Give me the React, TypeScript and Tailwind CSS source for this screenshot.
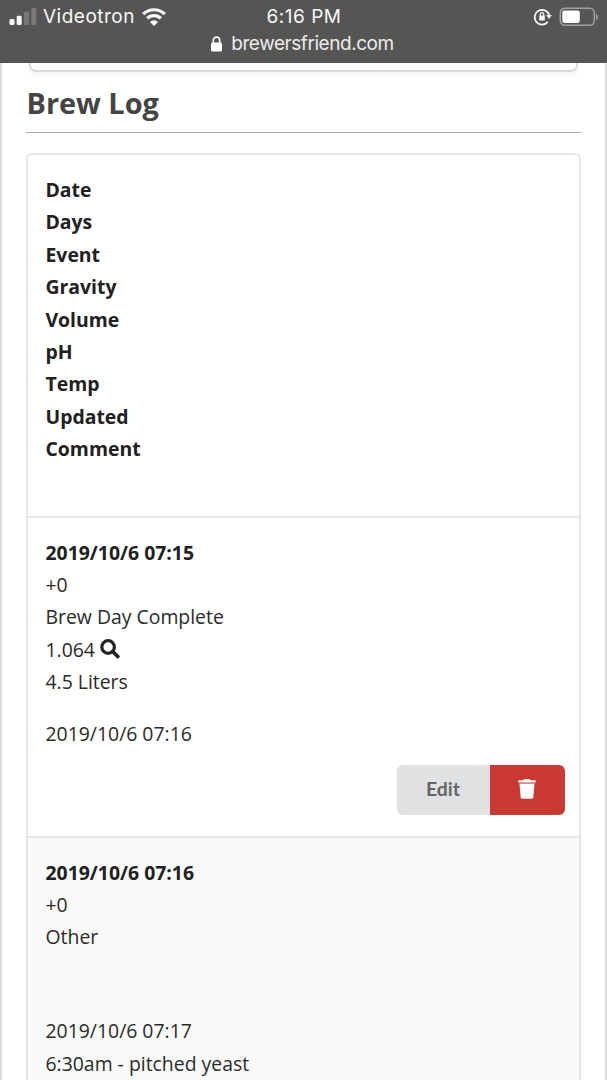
import React from "react"

type Entry = {
  date: string
  days: string
  event: string
  gravity?: string
  volume?: string
  updated: string
  comment?: string
}

const columns = [
  "Date",
  "Days",
  "Event",
  "Gravity",
  "Volume",
  "pH",
  "Temp",
  "Updated",
  "Comment",
]

const entries: Entry[] = [
  {
    date: "2019/10/6 07:15",
    days: "+0",
    event: "Brew Day Complete",
    gravity: "1.064",
    volume: "4.5 Liters",
    updated: "2019/10/6 07:16",
  },
  {
    date: "2019/10/6 07:16",
    days: "+0",
    event: "Other",
    updated: "2019/10/6 07:17",
    comment: "6:30am - pitched yeast",
  },
]

function StatusBar() {
  return (
    <header className="relative z-10 h-[63px] shrink-0 bg-[#555554] text-[#f8f8f8] font-[Inter,sans-serif]">
      <div className="grid grid-cols-3 items-center h-[33px] pl-[9px] pr-[8px]">
        <div className="flex items-center">
          <svg width="28" height="18" viewBox="0 0 28 18" fill="currentColor">
            <rect x="0.5" y="11" width="5" height="6" rx="1.3" />
            <rect x="7.7" y="7.7" width="5" height="9.3" rx="1.3" />
            <rect x="15" y="3.5" width="5" height="13.5" rx="1.3" opacity=".22" />
            <rect x="22.3" y="0" width="5" height="17" rx="1.3" opacity=".22" />
          </svg>
          <span className="ml-[6px] text-[19px] leading-[33px] tracking-[0.5px]">
            Videotron
          </span>
          <svg
            className="ml-[7px] shrink-0"
            width="24"
            height="18"
            viewBox="0 0 24 18"
            fill="none"
            stroke="currentColor"
            strokeWidth="3.2"
          >
            <path d="M1.2 6.2a15.3 15.3 0 0 1 21.6 0" />
            <path d="M5.2 10.4a9.6 9.6 0 0 1 13.6 0" />
            <path d="M12 18l-4-4.1a5.7 5.7 0 0 1 8 0z" fill="currentColor" stroke="none" />
          </svg>
        </div>
        <span className="text-center text-[19px] leading-[33px] tracking-[0.5px]">
          6:16 PM
        </span>
        <div className="flex items-center justify-end">
          <svg width="20" height="18" viewBox="0 0 20 18" fill="none" stroke="currentColor">
            <path d="M14.8 13.9A7.4 7.4 0 1 1 16.1 7" strokeWidth="1.8" />
            <path d="M13.2 7.1h5.6l-2.8 4z" fill="currentColor" stroke="none" />
            <rect x="6.2" y="7.5" width="5.6" height="5" rx=".6" fill="currentColor" stroke="none" />
            <path d="M7.3 8V6.3a1.7 1.7 0 0 1 3.4 0V8" strokeWidth="1.2" />
          </svg>
          <svg className="ml-[6px]" width="40" height="20" viewBox="0 0 40 20" fill="none">
            <rect x="1.3" y="1.3" width="34" height="17" rx="4.5" stroke="#a0a0a0" strokeWidth="1.5" />
            <rect x="3.3" y="3.5" width="17.5" height="12.5" rx="2.2" fill="#fff" />
            <path d="M37 7c2.5.8 2.5 5.2 0 6z" fill="#a0a0a0" />
          </svg>
        </div>
      </div>
      <div className="flex items-center justify-center h-[22px] text-[#ececec]">
        <svg width="11" height="16" viewBox="0 0 11 16" fill="none">
          <rect x="0" y="6.5" width="11" height="9" rx="1.5" fill="#fff" />
          <path d="M2.3 7.5V4.3a3.2 3.2 0 0 1 6.4 0v3.2" stroke="#fff" strokeWidth="1.6" />
        </svg>
        <span className="ml-[9px] mr-[2px] text-[19px] leading-[22px] tracking-[-0.45px]">
          brewersfriend.com
        </span>
      </div>
    </header>
  )
}

function SearchIcon() {
  return (
    <svg className="ml-[5px] -mt-px size-5" viewBox="0 0 20 20" fill="none" stroke="#242424">
      <circle cx="8.1" cy="8" r="6.3" strokeWidth="3.2" />
      <path d="M12.8 12.7l5 4.8" strokeWidth="3.8" strokeLinecap="round" />
    </svg>
  )
}

function Actions() {
  return (
    <div className="flex justify-end mt-[14.6px] -mr-[3px] h-[50px]">
      <button className="w-[93px] rounded-l-[6px] bg-[#e0e1e2] text-[#656565] text-[19.4px] font-bold font-[Lato,sans-serif] pb-[2px]">
        Edit
      </button>
      <button className="w-[75px] rounded-r-[6px] bg-[#c93a32] flex items-center justify-center">
        <svg className="-mt-[2px]" width="18" height="20" viewBox="0 0 18 20" fill="#fff">
          <path d="M.8 1.2h4.8L6.5 0h5l.9 1.2h4.8q.6 0 .6.6v1.7H.2V1.8q0-.6.6-.6z" />
          <path d="M1.5 4.7h15l-1.2 13.5q-.2 1.6-1.8 1.6h-9q-1.6 0-1.8-1.6z" />
          <path d="M1.4 4.1h15.2" stroke="#e59d99" strokeWidth="1.2" />
        </svg>
      </button>
    </div>
  )
}

export default function App() {
  return (
    <div className="flex flex-col h-[1080px] overflow-hidden bg-white text-[#2b2b2b] font-['Open_Sans',sans-serif]">
      <StatusBar />
      <main className="flex-1 min-h-0 overflow-hidden border-x-2 border-[#dcdcdc] px-6">
        <div className="mx-[3px] h-[9px] rounded-b-[7px] border-2 border-t-0 border-[#d9d9da] shadow-[0_2px_5px_rgba(34,36,38,0.08)]" />
        <h2 className="h-[61px] pt-[12px] pl-[0.5px] border-b border-[#a9a9a9] text-[28.9px] leading-[38px] font-bold text-[#444]">
          Brew Log
        </h2>
        <div className="mt-5 h-[1000px] rounded-t-[6px] border-2 border-[#e6e6e6] text-[19.4px] leading-[32.4px] overflow-hidden">
          <div className="h-[361px] pt-[19px] px-[17.5px] font-bold text-[#212121]">
            {columns.map((column) => (
              <div key={column}>{column}</div>
            ))}
          </div>
          {entries.map((entry, i) => (
            <div
              key={entry.date}
              className={`border-t-2 border-[#e6e6e6] pt-[18.5px] px-[17.5px] ${
                i % 2 ? "h-[360px] bg-[#fafafa]" : "h-[320px]"
              }`}
            >
              <div className="font-bold text-[#212121]">{entry.date}</div>
              <div>{entry.days}</div>
              <div>{entry.event}</div>
              {entry.gravity ? (
                <div className="flex items-center">
                  {entry.gravity}
                  <SearchIcon />
                </div>
              ) : (
                <div className="h-[21px]" />
              )}
              {entry.volume ? (
                <div>{entry.volume}</div>
              ) : (
                <div className="h-[21px]" />
              )}
              {/* pH and temp are blank */}
              <div className="h-[19.5px]" />
              <div>{entry.updated}</div>
              {entry.comment ? <div>{entry.comment}</div> : <Actions />}
            </div>
          ))}
        </div>
      </main>
    </div>
  )
}
